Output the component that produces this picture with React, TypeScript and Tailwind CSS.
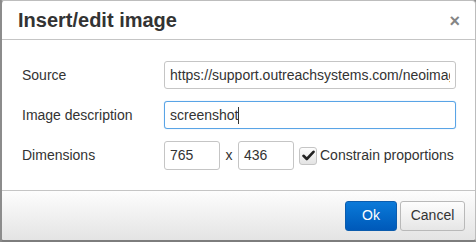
const font = { fontFamily: '"Liberation Sans", Arial, sans-serif' };

const Field = ({ children, focused, className = '' }: { children: React.ReactNode; focused?: boolean; className?: string }) => (
  <div
    className={`h-[28px] flex items-center overflow-hidden whitespace-nowrap rounded-[3px] border bg-white px-[5px] text-[14px] text-[#333] ${
      focused ? 'border-[#59a4e6] shadow-[0_0_1px_rgba(89,164,230,0.6)]' : 'border-[#c5c5c5]'
    } ${className}`}
  >
    {children}
  </div>
);

export default function App() {
  return (
    <div style={font} className="w-[476px] h-[242px] bg-[#8a8a8a] p-0">
      <div className="w-full h-full flex flex-col bg-white rounded-[4px] overflow-hidden border-t border-r border-[#bdbdbd] border-l-2 border-l-[#8c8c8c] border-b-2 border-b-[#7d7d7d]">
        <header className="h-[39px] shrink-0 flex items-center justify-between pl-[16px] pr-[15px] border-b border-[#c5c5c5]">
          <h1 className="text-[20px] font-bold text-[#333] leading-none">Insert/edit image</h1>
          <span className="text-[18px] font-bold text-[#858585] leading-none mt-[2px]">×</span>
        </header>

        <div className="flex-1 flex flex-col gap-[12px] pt-[21px] pl-[20px] pr-[19px]">
          <div className="flex items-center">
            <label className="w-[142px] text-[14px] text-[#333]">Source</label>
            <input
              readOnly
              value="https://support.outreachsystems.com/neoimages/screenshot.png"
              style={font}
              className="flex-1 min-w-0 h-[28px] rounded-[3px] border border-[#c5c5c5] bg-white px-[5px] text-[14px] text-[#333] outline-none"
            />
          </div>
          <div className="flex items-center">
            <label className="w-[142px] text-[14px] text-[#333]">Image description</label>
            <Field focused className="flex-1">
              screenshot<span className="inline-block w-px h-[17px] bg-[#333]" />
            </Field>
          </div>
          <div className="flex items-center">
            <label className="w-[142px] text-[14px] text-[#333]">Dimensions</label>
            <Field className="w-[56px] h-[29px]">765</Field>
            <span className="w-[18px] text-center text-[14px] text-[#333]">x</span>
            <Field className="w-[56px] h-[29px]">436</Field>
            <div className="ml-[5px] w-[18px] h-[18px] rounded-[3px] border border-[#c5c5c5] bg-gradient-to-b from-[#fdfdfd] to-[#e3e3e3] flex items-center justify-center">
              <svg width="13" height="11" viewBox="0 0 13 11">
                <path d="M1.5 5.8 L4.8 9 L11.5 1.8" fill="none" stroke="#222" strokeWidth="2.6" strokeLinecap="round" strokeLinejoin="round" />
              </svg>
            </div>
            <span className="ml-[3px] text-[14px] text-[#333] whitespace-nowrap">Constrain proportions</span>
          </div>
        </div>

        <footer className="h-[50px] shrink-0 flex items-center justify-end gap-[3px] pr-[10px] border-t border-[#c5c5c5] bg-gradient-to-b from-[#fdfdfd] to-[#e4e4e4]">
          <button className="w-[52px] h-[30px] rounded-[3px] border border-[#0b5cad] bg-gradient-to-b from-[#0c7ad9] to-[#0059b9] text-[14px] text-white">
            Ok
          </button>
          <button className="w-[65px] h-[30px] rounded-[3px] border border-[#b9b9b9] bg-gradient-to-b from-[#fdfdfd] to-[#e6e6e6] text-[14px] text-[#333]">
            Cancel
          </button>
        </footer>
      </div>
    </div>
  );
}
